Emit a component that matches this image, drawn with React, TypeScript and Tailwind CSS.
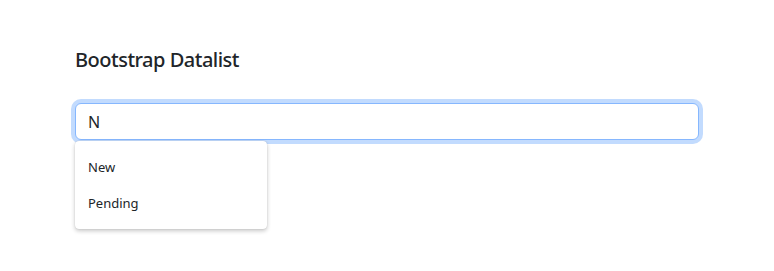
import { useState } from "react";

const options = ["New", "Pending"];

export default function App() {
  const [value, setValue] = useState("N");
  const matches = options.filter((o) =>
    o.toLowerCase().includes(value.trim().toLowerCase())
  );

  return (
    <div className="min-h-[271px] bg-white px-[75px] pt-[48px] font-['Noto_Sans',sans-serif] text-[#212529]">
      <h5 className="text-[20px] font-medium leading-[24px] tracking-[-0.5px]">Bootstrap Datalist</h5>
      <div className="relative mt-[31px]">
        <input
          value={value}
          onChange={(e) => setValue(e.target.value)}
          className="block h-[37px] w-full rounded-[6px] border border-[#86b7fe] bg-white px-3 text-[16px] text-[#212529] shadow-[0_0_0_4px_rgba(13,110,253,0.25)] outline-none"
        />
        {matches.length > 0 && (
          <ul className="absolute left-0 top-[38px] w-[192px] rounded-[4px] bg-white pb-[7px] pt-[9px] shadow-[0_2px_4px_rgba(0,0,0,0.22),0_0_1px_rgba(0,0,0,0.2)]">
            {matches.map((m) => (
              <li key={m} className="flex h-[36px] items-center px-[13px] text-[13px]">
                {m}
              </li>
            ))}
          </ul>
        )}
      </div>
    </div>
  );
}
